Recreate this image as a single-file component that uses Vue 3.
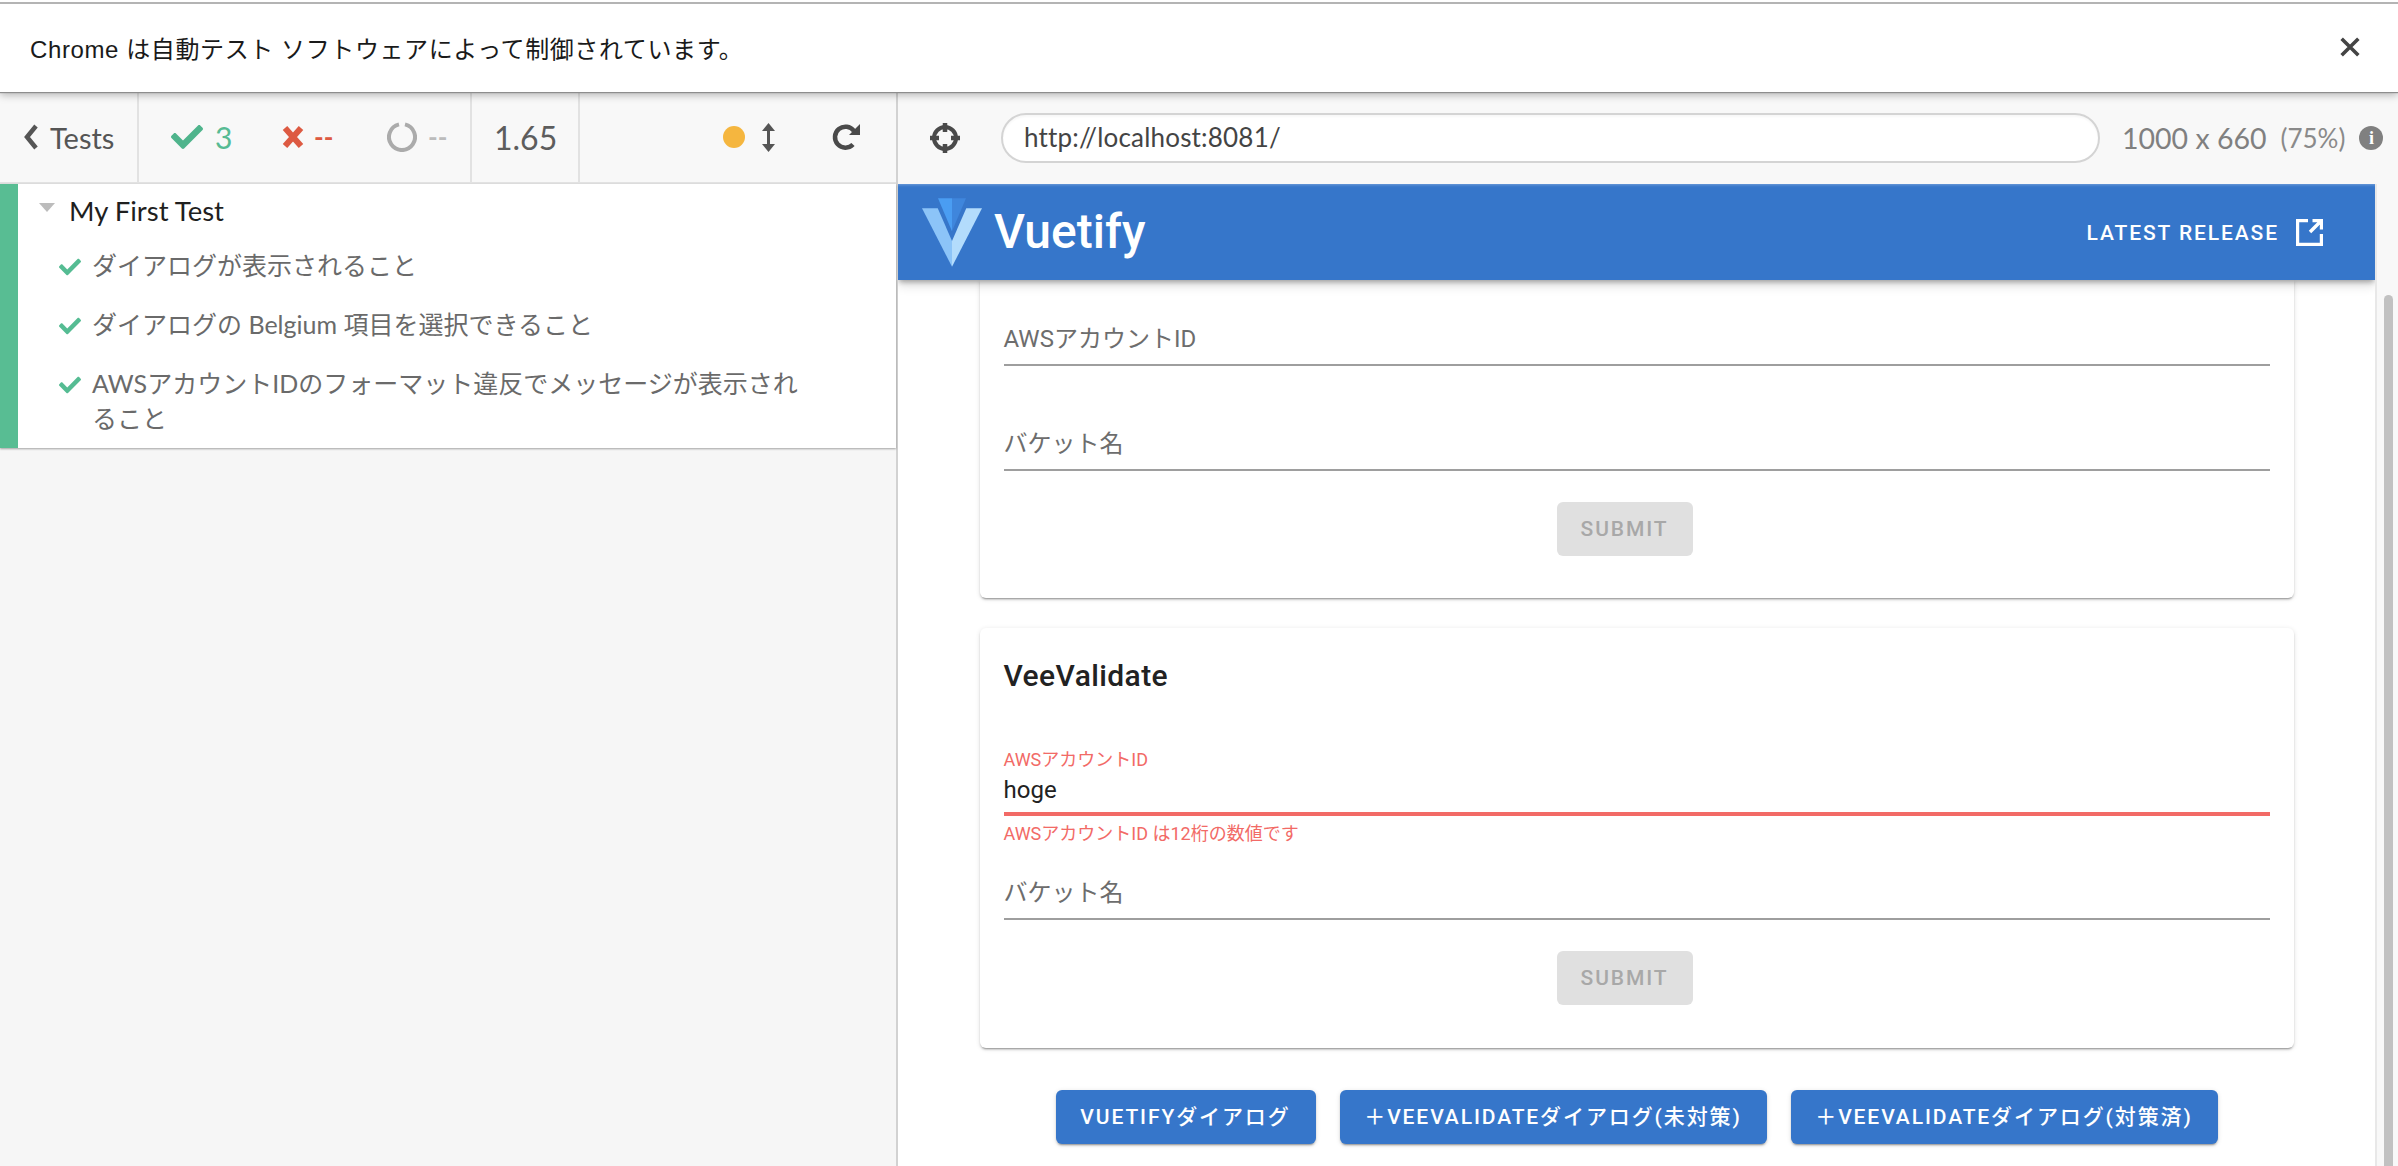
<script setup>
const tests = [
  { id: 1, text: 'ダイアログが表示されること' },
  { id: 2, text: 'ダイアログの Belgium 項目を選択できること' },
  { id: 3, text: 'AWSアカウントIDのフォーマット違反でメッセージが表示されること' },
]
const dialogs = [
  { id: 1, label: 'Vuetifyダイアログ', cls: 'dlg-a' },
  { id: 2, label: '＋VeeValidateダイアログ(未対策)', cls: 'dlg-b' },
  { id: 3, label: '＋VeeValidateダイアログ(対策済)', cls: 'dlg-b' },
]
const checkPath = 'M173.898 439.404l-166.4-166.4c-9.997-9.997-9.997-26.206 0-36.204l36.203-36.204c9.997-9.998 26.207-9.998 36.204 0L192 312.69 432.095 72.596c9.997-9.997 26.207-9.997 36.204 0l36.203 36.204c9.997 9.997 9.997 26.206 0 36.204l-294.4 294.401c-9.998 9.997-26.207 9.997-36.204-.001z'
</script>

<template>
  <div class="app">
    <div class="infobar">
      <span class="info-text">Chrome は自動テスト ソフトウェアによって制御されています。</span>
      <svg class="close" viewBox="0 0 18 18"><path d="M1.5 1.5 16.5 16.5M16.5 1.5 1.5 16.5" /></svg>
    </div>
    <div class="main">
      <section class="left">
        <div class="toolbar left-bar">
          <div class="seg seg-tests">
            <svg class="chev" viewBox="0 0 14 26"><path d="M12 2 3 13l9 11" /></svg>
            <span>Tests</span>
          </div>
          <div class="seg seg-stats">
            <svg class="s-check" viewBox="0 0 512 512"><path :d="checkPath" /></svg>
            <span class="n-pass">3</span>
            <svg class="s-x" viewBox="0 0 22 24"><path d="M3 3 19 21M19 3 3 21" /></svg>
            <span class="n-fail">--</span>
            <svg class="s-spin" viewBox="0 0 30 30"><path d="M12 2.400A13 13 0 1 0 18 2.400" /></svg>
            <span class="n-pend">--</span>
          </div>
          <div class="seg seg-time">1.65</div>
          <div class="seg-controls">
            <span class="dot"></span>
            <svg class="arrows" viewBox="0 0 15 29"><path d="M7.500 0 14 8H1zM7.500 29 1 21h13z" /><rect x="6" y="6" width="3" height="17" /></svg>
            <svg class="reload" viewBox="0 0 29 28"><path class="reload-arc" d="M21 21.500A10.500 10.500 0 1 1 22 8" /><path class="reload-head" d="M28 1v11H17z" /></svg>
          </div>
        </div>
        <div class="runnable">
          <div class="suite">
            <span class="tri"></span>
            <span>My First Test</span>
          </div>
          <div v-for="t in tests" :key="t.id" class="test">
            <svg class="t-check" viewBox="0 0 512 512"><path :d="checkPath" /></svg>
            <span class="t-text">{{ t.text }}</span>
          </div>
        </div>
      </section>
      <section class="right">
        <div class="toolbar right-bar">
          <svg class="cross" viewBox="0 0 30 30">
            <circle cx="15" cy="15" r="11" />
            <path d="M15 0v9M15 21v9M0 15h9M21 15h9" />
          </svg>
          <div class="url">http://localhost:8081/</div>
          <div class="size">1000 x 660</div>
          <div class="pct">(75%)</div>
          <span class="info">i</span>
        </div>
        <div class="stage">
          <div class="viewport">
            <header class="vheader">
              <svg class="logo" viewBox="0 0 87.500 100">
                <polygon fill="#4a9df2" points="43.750,0 23.310,0 43.750,48.320" />
                <polygon fill="#8cc4f8" points="43.750,62.500 43.750,100 0,14.580 22.970,14.580" />
                <polygon fill="#3f86dc" points="43.750,0 64.190,0 43.750,48.320" />
                <polygon fill="#b3dcfc" points="64.530,14.580 87.500,14.580 43.750,100 43.750,62.500" />
              </svg>
              <span class="brand">Vuetify</span>
              <span class="release">LATEST RELEASE</span>
              <svg class="ext" viewBox="0 0 27 27"><path d="M12 1.500H1.500v24h24V15M14 13 25 2M16.500 1.500h9v9" /></svg>
            </header>
            <div class="content">
              <div class="card card-cut">
                <div class="field f1"><span class="ph">AWSアカウントID</span></div>
                <div class="field f2"><span class="ph">バケット名</span></div>
                <div class="submit-row"><button class="submit" disabled>SUBMIT</button></div>
              </div>
              <div class="card card-two">
                <h2 class="title">VeeValidate</h2>
                <div class="err-label">AWSアカウントID</div>
                <div class="err-input">hoge</div>
                <div class="err-msg">AWSアカウントID は12桁の数値です</div>
                <div class="field f3"><span class="ph">バケット名</span></div>
                <div class="submit-row"><button class="submit" disabled>SUBMIT</button></div>
              </div>
              <div class="dialogs">
                <button v-for="d in dialogs" :key="d.id" class="dlg" :class="d.cls">{{ d.label }}</button>
              </div>
            </div>
          </div>
          <div class="scrollbar"><div class="thumb"></div></div>
        </div>
      </section>
    </div>
  </div>
</template>

<style>
html, body { margin: 0; overflow: hidden; background: #fff; }
</style>

<style scoped>
.app {
  width: 2398px;
  height: 1166px;
  display: flex;
  flex-direction: column;
  overflow: hidden;
  font-family: Lato, "Noto Sans CJK JP", sans-serif;
  background: #f6f6f6;
}
.infobar {
  height: 92px;
  box-sizing: border-box;
  background: #fff;
  border-top: 2px solid #fff;
  box-shadow: inset 0 2px 0 #b4b4b4, 0 1px 1px #8d8d8d, 0 3px 8px rgba(0, 0, 0, .28);
  display: flex;
  align-items: center;
  justify-content: space-between;
  padding: 0 38px 0 30px;
  position: relative;
  z-index: 5;
}
.info-text { font-size: 24px; letter-spacing: .6px; color: #1a1a1a; font-family: "Liberation Sans", "Noto Sans CJK JP", sans-serif; }
.close { width: 20px; height: 20px; }
.close path { stroke: #444; stroke-width: 3.200; fill: none; }
.main { flex: 1; display: flex; min-height: 0; }
.left {
  width: 898px;
  flex: none;
  box-sizing: border-box;
  border-right: 2px solid #d2d2d2;
  display: flex;
  flex-direction: column;
}
.right { flex: 1; min-width: 0; display: flex; flex-direction: column; background: #fff; }
.toolbar {
  height: 92px;
  flex: none;
  box-sizing: border-box;
  background: #f8f8f8;
  display: flex;
  align-items: center;
  color: #5d5d5d;
}
.left-bar { border-bottom: 2px solid #e2e2e2; }
.seg { height: 100%; display: flex; align-items: center; box-sizing: border-box; border-right: 2px solid #e2e2e2; }
.seg-tests { width: 139px; padding-left: 24px; font-size: 29px; color: #555; gap: 12px; }
.chev { width: 14px; height: 26px; }
.chev path { fill: none; stroke: #555; stroke-width: 4.500; }
.seg-stats { width: 333px; font-size: 30px; position: relative; padding-left: 32px; }
.s-check { width: 32px; height: 32px; fill: #4fb48c; }
.n-pass { color: #57bb93; margin-left: 12px; width: 67px; }
.s-x { width: 22px; height: 24px; }
.s-x path { stroke: #dd5a42; stroke-width: 6; fill: none; }
.n-fail { color: #dd5a42; margin-left: 10px; width: 73px; font-weight: 700; font-size: 26px; }
.s-spin { width: 30px; height: 30px; }
.s-spin path { stroke: #ababab; stroke-width: 4; fill: none; }
.n-pend { color: #bcbcbc; margin-left: 11px; font-weight: 700; font-size: 26px; }
.seg-time { width: 108px; padding-left: 22px; font-size: 32px; color: #5d5d5d; }
.seg-controls { flex: 1; display: flex; align-items: center; padding-left: 143px; }
.dot { width: 22px; height: 22px; border-radius: 50%; background: #f5b63f; }
.arrows { width: 15px; height: 29px; margin-left: 16px; fill: #555; }
.reload { width: 29px; height: 28px; margin-left: 56px; }
.reload-arc { fill: none; stroke: #4a4a4a; stroke-width: 4.500; }
.reload-head { fill: #4a4a4a; }
.runnable {
  height: 264px;
  flex: none;
  box-sizing: border-box;
  background: #fff;
  border-left: 18px solid #58bd93;
  box-shadow: 0 1px 2px rgba(0, 0, 0, .35);
  padding-left: 21px;
}
.suite { height: 52px; display: flex; align-items: center; font-size: 27.500px; color: #1f1f1f; position: relative; }
.tri { width: 0; height: 0; border-left: 8.500px solid transparent; border-right: 8.500px solid transparent; border-top: 9px solid #bcbcbc; margin-right: 14px; margin-top: -6px; }
.test { display: flex; align-items: flex-start; font-size: 25px; line-height: 35px; color: #6a6a6a; margin-top: 24px; padding-left: 20px; }
.test:nth-child(2) { margin-top: 12px; }
.t-check { width: 22px; height: 22px; fill: #55bc93; flex: none; margin-top: 8px; margin-right: 11px; }
.t-text { width: 720px; }
.right-bar { padding-left: 32px; }
.cross { width: 30px; height: 30px; flex: none; }
.cross circle { fill: none; stroke: #4a4a4a; stroke-width: 4; }
.cross path { stroke: #4a4a4a; stroke-width: 4.500; fill: none; }
.url {
  width: 1099px;
  height: 50px;
  box-sizing: border-box;
  margin-left: 41px;
  border: 2px solid #d4d4d4;
  border-radius: 25px;
  background: #fff;
  padding-left: 21px;
  font-size: 26px;
  letter-spacing: .2px;
  line-height: 44px;
  color: #444;
  box-shadow: inset 0 2px 2px rgba(0, 0, 0, .03);
}
.size { margin-left: 22px; font-size: 28.500px; color: #808080; }
.pct { margin-left: 14px; font-size: 26px; color: #8a8a8a; }
.info {
  margin-left: 14px;
  width: 24px;
  height: 24px;
  border-radius: 50%;
  background: #808080;
  color: #fff;
  font: 700 18px/24px "Liberation Serif", serif;
  text-align: center;
}
.stage { flex: 1; display: flex; min-height: 0; }
.viewport { flex: 1; min-width: 0; display: flex; flex-direction: column; overflow: hidden; }
.vheader {
  height: 96px;
  flex: none;
  box-sizing: border-box;
  background: #3676ca;
  display: flex;
  align-items: center;
  padding: 0 52px 0 24px;
  box-shadow: 0 3px 5px -1px rgba(0, 0, 0, .3), 0 6px 10px rgba(0, 0, 0, .12), inset 0 3px 3px -2px rgba(255, 255, 255, .3);
  position: relative;
  z-index: 2;
}
.logo { width: 60px; height: 69px; flex: none; }
.brand { color: #fff; font: 500 48px/1 Roboto, sans-serif; margin-left: 12px; flex: 1; }
.release { color: #fff; font: 500 21px/1 Roboto, sans-serif; letter-spacing: 1.900px; margin-top: 2px; }
.ext { width: 27px; height: 27px; margin-left: 17px; margin-top: 1px; flex: none; }
.ext path { fill: none; stroke: #fff; stroke-width: 3.400; }
.content {
  width: 1314px;
  margin: 0 auto;
  font-family: Roboto, "Noto Sans CJK JP", sans-serif;
}
.card {
  background: #fff;
  border-radius: 6px;
  padding: 0 24px;
  box-shadow: 0 3px 1px -2px rgba(0, 0, 0, .2), 0 2px 2px rgba(0, 0, 0, .14), 0 1px 5px rgba(0, 0, 0, .12);
}
.card-cut { height: 318px; box-sizing: border-box; border-radius: 0 0 6px 6px; }
.card-two { height: 420px; box-sizing: border-box; margin-top: 30px; overflow: hidden; }
.field {
  box-sizing: border-box;
  border-bottom: 2px solid #9e9e9e;
  display: flex;
  align-items: flex-end;
  padding-bottom: 9px;
}
.f1 { height: 86px; }
.f2 { height: 105px; }
.f3 { height: 74px; }
.ph { font-size: 24px; line-height: 32px; color: #6d6d6d; }
.submit-row { display: flex; justify-content: center; margin-top: 31px; padding-right: 24px; }
.submit {
  width: 136px;
  height: 54px;
  border: 0;
  border-radius: 6px;
  background: #e0e0e0;
  color: #a8a8a8;
  font: 500 21px/1 Roboto, sans-serif;
  letter-spacing: 1.900px;
  padding: 0;
}
.title { margin: 0; height: 48px; padding-top: 24px; font: 500 30px/48px Roboto, sans-serif; color: #222; letter-spacing: .4px; }
.err-label { margin-top: 48px; font-size: 18px; line-height: 24px; color: #f26a66; }
.err-input {
  height: 44px;
  box-sizing: border-box;
  border-bottom: 4px solid #f26a66;
  font-size: 24px;
  line-height: 32px;
  color: #222;
  padding-top: 2px;
}
.err-msg { font-size: 18px; line-height: 24px; color: #f26a66; margin-top: 6px; }
.dialogs { display: flex; justify-content: center; gap: 24px; margin: 42px -40px 0; }
.dlg {
  height: 54px;
  border: 0;
  border-radius: 6px;
  background: #3676ca;
  color: #fff;
  font: 500 21px/1 Roboto, "Noto Sans CJK JP", sans-serif;
  letter-spacing: 1.900px;
  text-transform: uppercase;
  padding: 0;
  box-shadow: 0 3px 1px -2px rgba(0, 0, 0, .2), 0 2px 2px rgba(0, 0, 0, .14), 0 1px 5px rgba(0, 0, 0, .12);
}
.dlg-a { width: 260px; }
.dlg-b { width: 427px; }
.scrollbar {
  width: 23px;
  flex: none;
  box-sizing: border-box;
  background: #f8f8f8;
  border-left: 2px solid #e8e8e8;
  padding: 111px 5px 0 7px;
}
.thumb { height: 100%; background: #c1c1c1; border-radius: 6px 6px 0 0; }
</style>
